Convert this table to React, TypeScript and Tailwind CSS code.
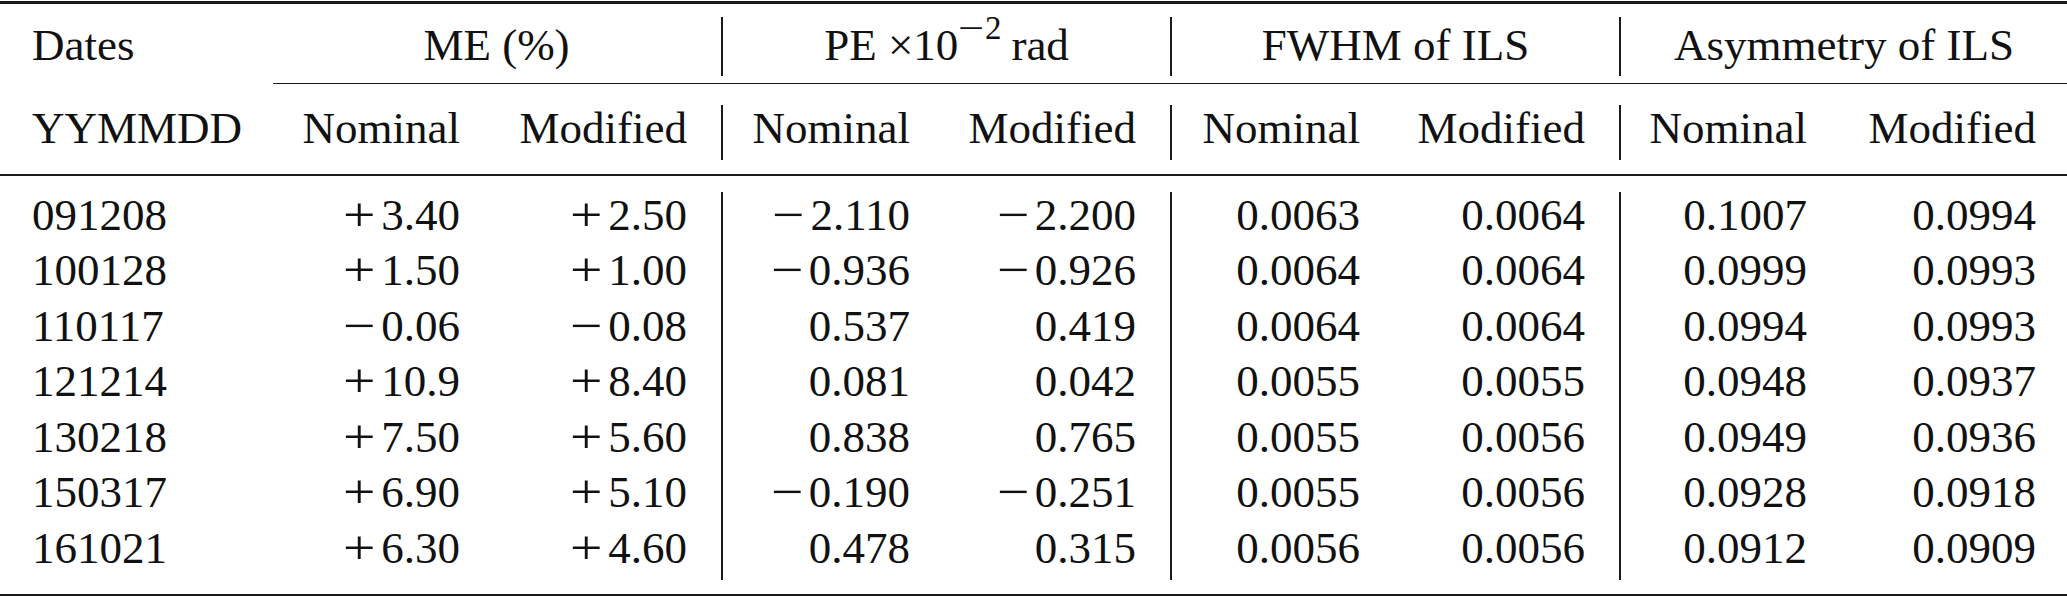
import React from 'react';

const grid = 'grid grid-cols-[272px_220px_229px_220px_229px_220px_229px_220px_228px]';

const rows: string[][] = [
  ['091208', '+3.40', '+2.50', '−2.110', '−2.200', '0.0063', '0.0064', '0.1007', '0.0994'],
  ['100128', '+1.50', '+1.00', '−0.936', '−0.926', '0.0064', '0.0064', '0.0999', '0.0993'],
  ['110117', '−0.06', '−0.08', '0.537', '0.419', '0.0064', '0.0064', '0.0994', '0.0993'],
  ['121214', '+10.9', '+8.40', '0.081', '0.042', '0.0055', '0.0055', '0.0948', '0.0937'],
  ['130218', '+7.50', '+5.60', '0.838', '0.765', '0.0055', '0.0056', '0.0949', '0.0936'],
  ['150317', '+6.90', '+5.10', '−0.190', '−0.251', '0.0055', '0.0056', '0.0928', '0.0918'],
  ['161021', '+6.30', '+4.60', '0.478', '0.315', '0.0056', '0.0056', '0.0912', '0.0909'],
];

// alignment, padding and the vertical bars, per column
const cellCls = [
  'pl-[32px] text-left',
  'pr-[32px] text-right',
  'pr-[34px] text-right',
  'pr-[31px] text-right border-l-2 border-[#1a1a1a]',
  'pr-[34px] text-right',
  'pr-[30px] text-right border-l-2 border-[#1a1a1a]',
  'pr-[34px] text-right',
  'pr-[32px] text-right border-l-2 border-[#1a1a1a]',
  'pr-[31px] text-right',
];

function Num({ v }: { v: string }) {
  if (v.startsWith('+') || v.startsWith('−')) {
    return (
      <span>
        <span className="inline-block w-[38px] text-left leading-[20px]">
          <span className="inline-block origin-left scale-x-[1.28] scale-y-[1.08] leading-[20px]">{v[0]}</span>
        </span>
        {v.slice(1)}
      </span>
    );
  }
  return <span>{v}</span>;
}

export default function App() {
  return (
    <div className="w-[2067px] bg-white text-[#111] text-[45px] font-['Liberation_Serif','Times_New_Roman',serif]">
      {/* top rule */}
      <div className="mt-[1px] h-[2.5px] bg-[#1a1a1a]" />

      {/* header row 1 */}
      <div className={`${grid} mt-[13.5px] leading-[57.6px]`}>
        <div className="pl-[32px] pb-[1.4px]">Dates</div>
        <div className="col-span-2 text-center pb-[1.4px]">ME (%)</div>
        <div className="col-span-2 text-center pb-[1.4px] border-l-2 border-[#1a1a1a]">
          PE ×10
          <span className="text-[33px] leading-[0] align-[21px]">
            <span className="inline-block origin-left scale-x-[1.4] mr-[8px]">−</span>2
          </span>
          <span className="ml-[10px]">rad</span>
        </div>
        <div className="col-span-2 text-center pb-[1.4px] border-l-2 border-[#1a1a1a]">FWHM of ILS</div>
        <div className="col-span-2 text-center pb-[1.4px] border-l-2 border-[#1a1a1a]">Asymmetry of ILS</div>
      </div>

      {/* cmidrule under the column groups */}
      <div className="mt-[7px] ml-[273px] h-[1.5px] bg-[#1a1a1a]" />

      {/* header row 2 */}
      <div className={`${grid} mt-[20.5px] leading-[47.6px]`}>
        {['YYMMDD', 'Nominal', 'Modified', 'Nominal', 'Modified', 'Nominal', 'Modified', 'Nominal', 'Modified'].map(
          (h, i) => (
            <div key={i} className={`${cellCls[i]} pb-[7.4px]`}>
              {h}
            </div>
          ),
        )}
      </div>

      {/* mid rule */}
      <div className="mt-[14px] h-[2px] bg-[#1a1a1a]" />

      {/* data */}
      <div className={`${grid} mt-[16px] leading-[46px]`}>
        {rows.map((r) =>
          r.map((v, i) => (
            <div key={r[0] + i} className={`${cellCls[i]} pb-[9.5px]`}>
              {i === 0 ? v : <Num v={v} />}
            </div>
          )),
        )}
      </div>

      {/* bottom rule */}
      <div className="mt-[13.5px] h-[2.5px] bg-[#1a1a1a]" />
    </div>
  );
}
